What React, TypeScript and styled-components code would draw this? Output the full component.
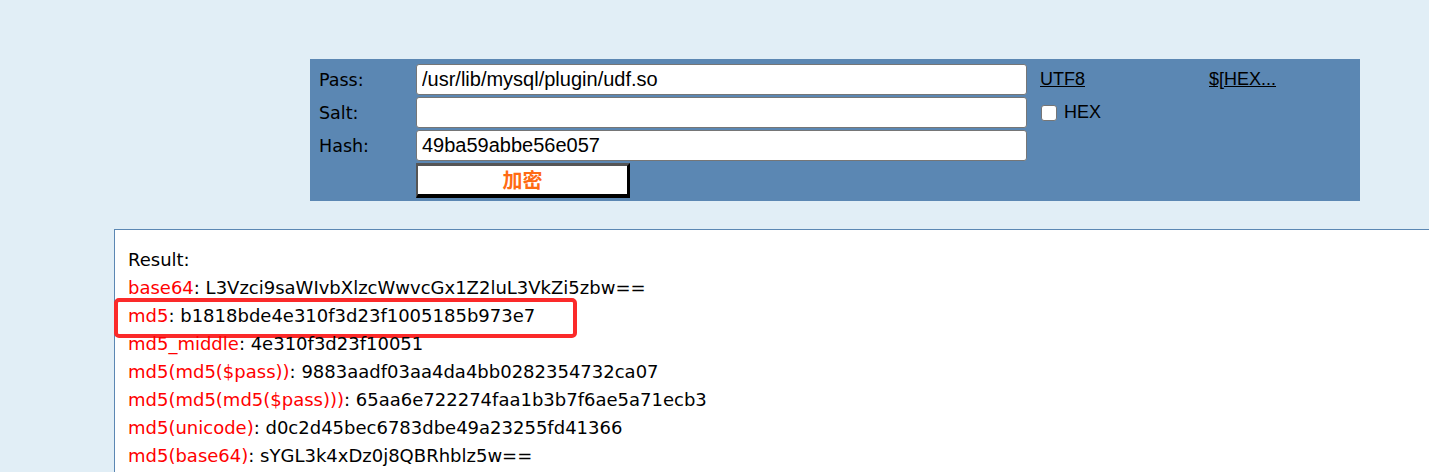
import React from "react";
import styled, { createGlobalStyle } from "styled-components";

const Global = createGlobalStyle`
  html, body { margin: 0; padding: 0; overflow: hidden; }
  body { background: #e1eef6; }
`;

const Page = styled.div`
  display: flex;
  flex-direction: column;
  width: 1429px;
  height: 472px;
  overflow: hidden;
`;

const Panel = styled.div`
  margin: 59px 0 0 310px;
  width: 1050px;
  height: 142px;
  box-sizing: border-box;
  background: #5b87b3;
  padding: 5px 0 0 0;
  display: grid;
  grid-template-columns: 106px 610px 183px 1fr;
  grid-auto-rows: 31px;
  row-gap: 2px;
  align-items: center;
`;

const Label = styled.div`
  padding-left: 9px;
  font-family: "DejaVu Sans", Verdana, sans-serif;
  font-size: 17.5px;
  color: #000;
`;

const Input = styled.input`
  box-sizing: border-box;
  width: 611px;
  height: 31px;
  margin: 0;
  padding: 0 0 0 5px;
  border: 1px solid #767676;
  border-radius: 3px;
  background: #fff;
  font-family: "Liberation Sans", Arial, sans-serif;
  font-size: 20px;
  color: #000;
  outline: none;
`;

const Side = styled.div<{ $pad: number }>`
  padding-left: ${(p) => p.$pad}px;
  display: flex;
  align-items: center;
  gap: 7px;
  font-family: "Liberation Sans", Arial, sans-serif;
  font-size: 18px;
  color: #000;
`;

const Link = styled.a`
  color: #000;
  text-decoration: underline;
  font-family: "Liberation Sans", Arial, sans-serif;
  font-size: 18px;
  cursor: pointer;
`;

const Check = styled.span`
  display: inline-block;
  flex: 0 0 auto;
  box-sizing: border-box;
  width: 16px;
  height: 16px;
  margin: 1px 0 0 1px;
  background: #fff;
  border: 1px solid #767676;
  border-radius: 3px;
`;

const Button = styled.button`
  grid-column: 2;
  box-sizing: border-box;
  width: 214px;
  height: 35px;
  align-self: start;
  margin: 0;
  background: #fff;
  border-style: solid;
  border-width: 3px 3px 4px 2px;
  border-color: #555 #000 #000 #555;
  font-family: "Noto Sans CJK SC", sans-serif;
  font-weight: 700;
  font-size: 20px;
  color: #ff6a13;
  padding: 0;
  line-height: 26px;
`;

const ResultBox = styled.div`
  margin: 28px 0 0 114px;
  width: 1400px;
  flex: 1;
  box-sizing: border-box;
  background: #fff;
  border: 1px solid #5b87b3;
  border-right: none;
  border-bottom: none;
  padding: 16px 0 0 13px;
  font-family: "DejaVu Sans", Verdana, sans-serif;
  font-size: 18px;
  color: #000;
`;

const Line = styled.div`
  position: relative;
  height: 28px;
  line-height: 28px;
  white-space: nowrap;
`;

const Key = styled.span`
  color: #ff0000;
`;

const Highlight = styled.div`
  position: absolute;
  left: -14px;
  top: -4px;
  width: 463px;
  height: 40px;
  box-sizing: border-box;
  border: 4px solid #fb2a2a;
  border-radius: 5px;
  pointer-events: none;
`;

const rows: [string, string][] = [
  ["base64", "L3Vzci9saWIvbXlzcWwvcGx1Z2luL3VkZi5zbw=="],
  ["md5", "b1818bde4e310f3d23f1005185b973e7"],
  ["md5_middle", "4e310f3d23f10051"],
  ["md5(md5($pass))", "9883aadf03aa4da4bb0282354732ca07"],
  ["md5(md5(md5($pass)))", "65aa6e722274faa1b3b7f6ae5a71ecb3"],
  ["md5(unicode)", "d0c2d45bec6783dbe49a23255fd41366"],
  ["md5(base64)", "sYGL3k4xDz0j8QBRhblz5w=="],
];

export default function App() {
  return (
    <Page>
      <Global />
      <Panel>
        <Label>Pass:</Label>
        <Input defaultValue="/usr/lib/mysql/plugin/udf.so" />
        <Side $pad={14}>
          <Link>UTF8</Link>
        </Side>
        <Side $pad={0}>
          <Link>$[HEX...</Link>
        </Side>
        <Label>Salt:</Label>
        <Input defaultValue="" />
        <Side $pad={14}>
          <Check role="checkbox" aria-checked="false" />
          <span>HEX</span>
        </Side>
        <div />
        <Label>Hash:</Label>
        <Input defaultValue="49ba59abbe56e057" />
        <div />
        <div />
        <div />
        <Button>加密</Button>
      </Panel>
      <ResultBox>
        <Line>Result:</Line>
        {rows.map(([k, v]) => (
          <Line key={k}>
            <Key>{k}</Key>: {v}
            {k === "md5" && <Highlight />}
          </Line>
        ))}
      </ResultBox>
    </Page>
  );
}
